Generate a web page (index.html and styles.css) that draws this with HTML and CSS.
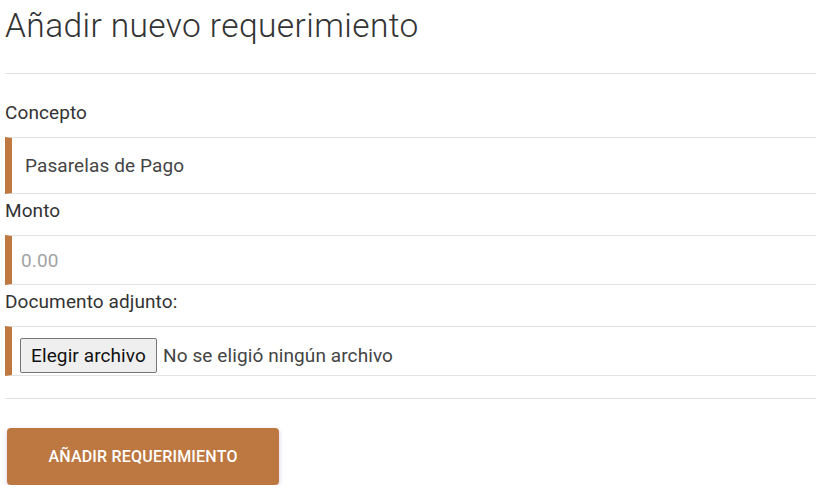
FILE: index.html
```html
<!DOCTYPE html>
<html lang="es">
<head>
<meta charset="utf-8">
<title>Añadir nuevo requerimiento</title>
<link rel="stylesheet" href="styles.css">
</head>
<body>
<div class="page">
  <h1 class="title">Añadir nuevo requerimiento</h1>
  <hr class="divider divider-top">
  <form class="form">
    <div class="field">
      <label class="label">Concepto</label>
      <input class="input input-tall" type="text" value="Pasarelas de Pago">
    </div>
    <div class="field">
      <label class="label">Monto</label>
      <input class="input input-short" type="text" placeholder="0.00">
    </div>
    <div class="field">
      <label class="label">Documento adjunto:</label>
      <div class="input file-input">
        <span class="file-button">Elegir archivo</span>
        <span class="file-name">No se eligió ningún archivo</span>
      </div>
    </div>
  </form>
  <hr class="divider divider-bottom">
  <button class="submit" type="button">AÑADIR REQUERIMIENTO</button>
</div>
</body>
</html>
```
FILE: styles.css
```css
* { box-sizing: border-box; }
html, body { margin: 0; padding: 0; background: #fff; }
body { font-family: Roboto, "Noto Sans", sans-serif; color: #333; overflow: hidden; }

.page { padding-left: 5px; width: 830px; }

.title {
  margin: 7px 0 0 0;
  font-size: 33.5px;
  line-height: 38px;
  font-weight: 300;
  letter-spacing: 0.4px;
  color: #333;
}

.divider {
  border: 0;
  height: 1px;
  background: #e2e2e2;
  margin: 0;
}
.divider-top { margin-top: 28px; }
.divider-bottom { margin-top: 22px; }

.form { display: flex; flex-direction: column; }

.field { display: flex; flex-direction: column; }
.field:first-child { margin-top: 27px; }
.field + .field { margin-top: 5px; }

.label {
  font-size: 19px;
  line-height: 24px;
  letter-spacing: 0.1px;
  color: #333;
  margin-bottom: 12px;
}

.input {
  display: flex;
  align-items: center;
  width: 100%;
  border: 0;
  border-top: 1px solid #e2e2e2;
  border-bottom: 1px solid #e2e2e2;
  border-left: 7px solid #bf7940;
  border-radius: 0;
  outline: none;
  font-family: Roboto, "Noto Sans", sans-serif;
  font-size: 19px;
  letter-spacing: 0.1px;
  color: #444;
  background: #fff;
}
.input-tall { height: 57px; padding-left: 13px; }
.input-short { height: 50px; padding-left: 9px; }
.input::placeholder { color: #a3a3a3; }

.file-input { height: 50px; padding: 10px 0 2px 8px; gap: 6px; }

.file-button {
  display: inline-flex;
  align-items: center;
  justify-content: center;
  width: 137px;
  height: 35px;
  border: 1px solid #767676;
  border-radius: 2px;
  background: #efefef;
  color: #111;
  font-size: 19px;
}
.file-name { font-size: 19px; color: #444; }

.submit {
  display: block;
  margin: 29px 0 0 2px;
  width: 272px;
  height: 57px;
  border: 0;
  border-radius: 4px;
  background: #bd7740;
  color: #fff;
  font-family: Roboto, "Noto Sans", sans-serif;
  font-size: 16px;
  font-weight: 500;
  letter-spacing: 0.2px;
  box-shadow: 0 2px 5px rgba(110, 60, 160, 0.28);
  cursor: pointer;
}
```
